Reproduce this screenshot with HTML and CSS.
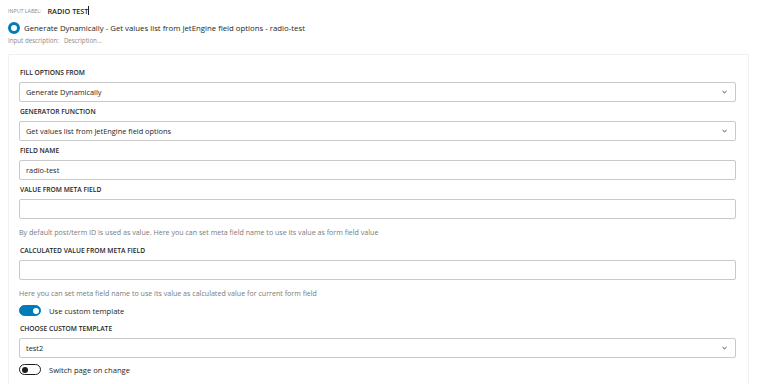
FILE: index.html
```html
<!DOCTYPE html>
<html lang="en">
<head>
    <meta charset="UTF-8">
    <title>Radio field settings</title>
    <link rel="stylesheet" href="styles.css">
</head>
<body>

    <div class="label-row">
        <span class="small-key">Input label:</span>
        <span class="label-value">RADIO TEST</span><span class="caret"></span>
    </div>

    <div class="choice-row">
        <span class="radio-dot"></span>
        <span>Generate Dynamically - Get values list from JetEngine field options - radio-test</span>
    </div>

    <div class="desc-row">
        <span>Input description:</span>
        <span>Description...</span>
    </div>

    <div class="card">
        <label class="field-label first">Fill options from</label>
        <div class="select">
            <span>Generate Dynamically</span>
            <svg class="chevron" viewBox="0 0 6 4" width="5" height="4"><path d="M0.7 1 L3 3 L5.3 1" fill="none" stroke="#1e1e1e" stroke-width="1"/></svg>
        </div>

        <label class="field-label">Generator function</label>
        <div class="select">
            <span>Get values list from JetEngine field options</span>
            <svg class="chevron" viewBox="0 0 6 4" width="5" height="4"><path d="M0.7 1 L3 3 L5.3 1" fill="none" stroke="#1e1e1e" stroke-width="1"/></svg>
        </div>

        <label class="field-label">Field name</label>
        <div class="text-input">radio-test</div>

        <label class="field-label">Value from meta field</label>
        <div class="text-input"></div>
        <p class="help">By default post/term ID is used as value. Here you can set meta field name to use its value as form field value</p>

        <label class="field-label after-help">Calculated value from meta field</label>
        <div class="text-input"></div>
        <p class="help">Here you can set meta field name to use its value as calculated value for current form field</p>

        <div class="toggle-row first-toggle">
            <span class="toggle on"><span class="knob"></span></span>
            <span>Use custom template</span>
        </div>

        <label class="field-label after-toggle">Choose custom template</label>
        <div class="select">
            <span>test2</span>
            <svg class="chevron" viewBox="0 0 6 4" width="5" height="4"><path d="M0.7 1 L3 3 L5.3 1" fill="none" stroke="#1e1e1e" stroke-width="1"/></svg>
        </div>

        <div class="toggle-row">
            <span class="toggle"><span class="knob"></span></span>
            <span>Switch page on change</span>
        </div>
    </div>

</body>
</html>
```

FILE: styles.css
```css
body {
    margin: 0;
    padding: 5px 8px 0;
    font-family: "Open Sans", "Noto Sans", sans-serif;
    color: #1e1e1e;
    background: #fff;
}

.label-row {
    display: flex;
    align-items: center;
    height: 11px;
}
.small-key {
    font-size: 5.3px;
    text-transform: uppercase;
    color: #8a8a8a;
    margin-right: 6px;
}
.label-value {
    font-size: 7.3px;
    font-weight: 600;
}
.caret {
    width: 1px;
    height: 9px;
    background: #1e1e1e;
}

.choice-row {
    display: flex;
    align-items: center;
    gap: 4px;
    margin-top: 6px;
    font-size: 7.8px;
}
.radio-dot {
    box-sizing: border-box;
    width: 12px;
    height: 12px;
    border-radius: 50%;
    border: 3.5px solid #007cba;
    background: #fff;
}

.desc-row {
    display: flex;
    gap: 5px;
    margin-top: 2px;
    font-size: 6.2px;
    color: #8a8a8a;
}

.card {
    box-sizing: border-box;
    margin-top: 9px;
    border: 1px solid #f1f1f1;
    border-bottom: none;
    width: 741px;
    padding: 13px 12px 20px 10px;
}

.field-label {
    display: block;
    font-size: 6.7px;
    font-weight: 600;
    text-transform: uppercase;
    line-height: 10px;
    margin: 5px 0 4px 1px;
}
.field-label.first {
    margin-top: 0;
}
.field-label.after-help {
    margin-top: 9px;
}
.field-label.after-toggle {
    margin-top: 8px;
}

.select, .text-input {
    box-sizing: border-box;
    height: 20px;
    border: 1px solid #c9c9c9;
    border-radius: 2px;
    padding: 0 6px;
    display: flex;
    align-items: center;
    justify-content: space-between;
    font-size: 7.4px;
}
.chevron {
    margin-right: 2px;
}

.help {
    margin: 8px 0 0;
    font-size: 7.1px;
    line-height: 10px;
    color: #7a7a7a;
}

.toggle-row {
    display: flex;
    align-items: center;
    gap: 8px;
    margin-top: 6px;
    font-size: 7.6px;
}
.toggle-row.first-toggle {
    margin-top: 7px;
}
.toggle {
    box-sizing: border-box;
    width: 22px;
    height: 11px;
    border-radius: 6px;
    border: 1px solid #1e1e1e;
    background: #fff;
    display: flex;
    align-items: center;
    padding: 0 1.5px;
}
.toggle .knob {
    width: 6px;
    height: 6px;
    border-radius: 50%;
    background: #1e1e1e;
}
.toggle.on {
    background: #007cba;
    border-color: #007cba;
    justify-content: flex-end;
}
.toggle.on .knob {
    background: #fff;
}
```
